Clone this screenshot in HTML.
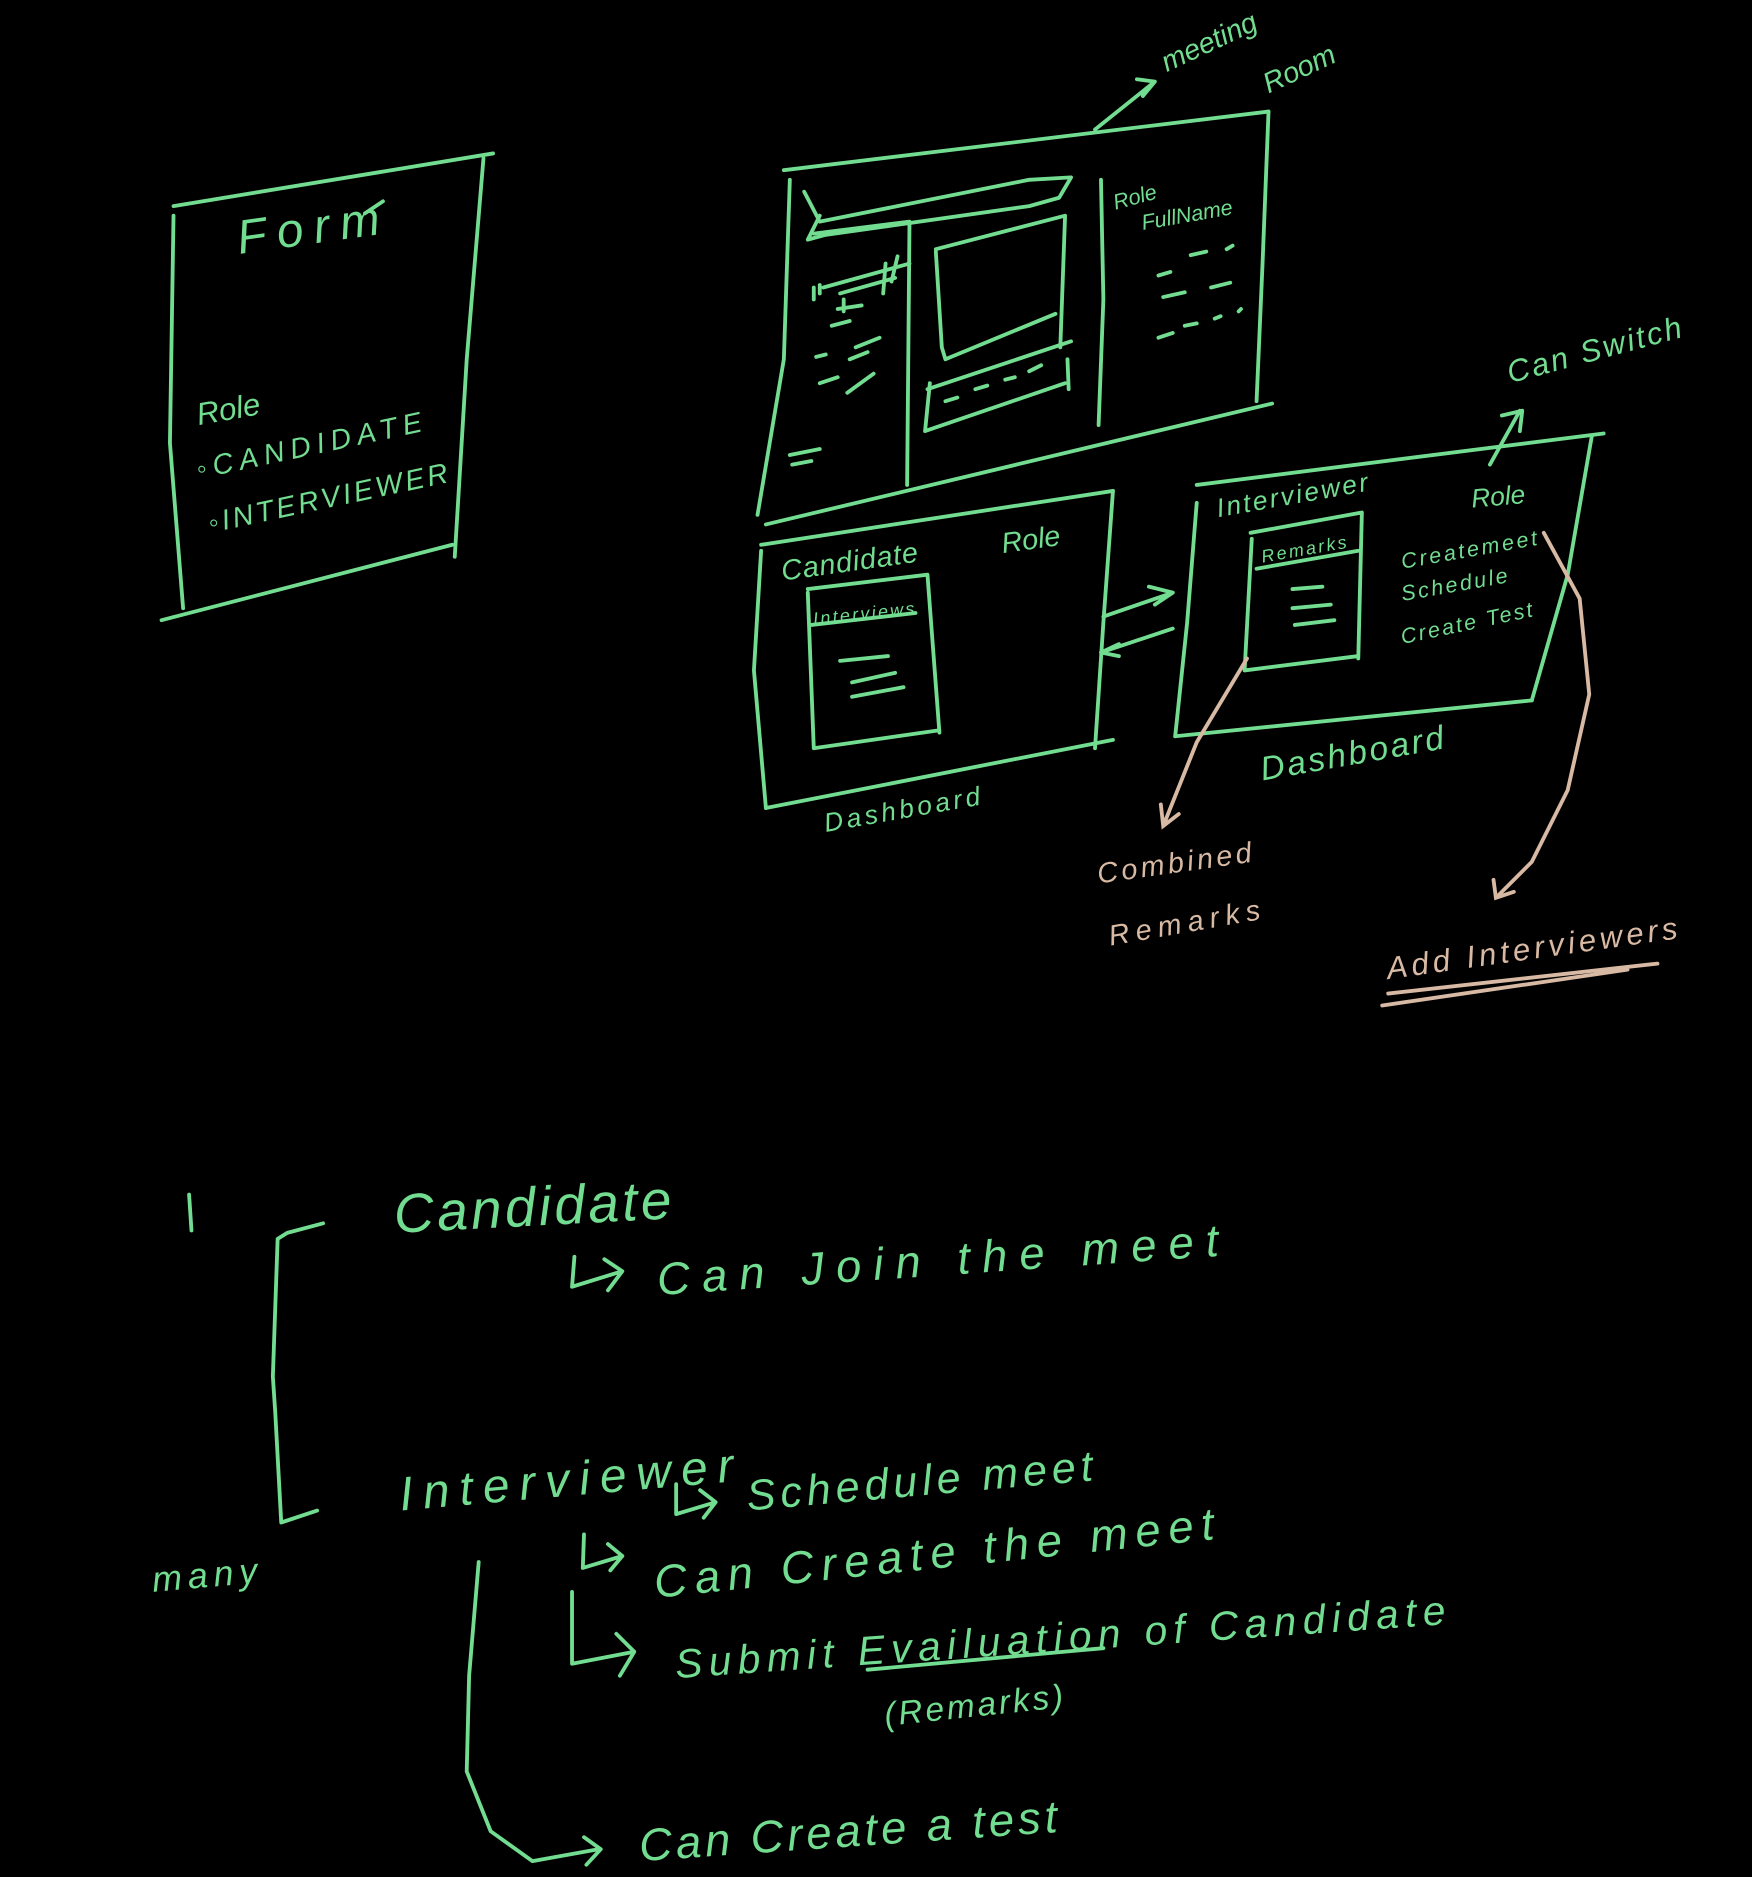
<!DOCTYPE html>
<html><head><meta charset="utf-8"><style>
html,body{margin:0;padding:0;background:#000;width:1752px;height:1877px;overflow:hidden}
svg{display:block}
text{font-family:"Liberation Sans",sans-serif;font-style:italic;fill:#72dc90}
.b{fill:#d8b9a3}
</style></head><body>
<svg width="1752" height="1877" viewBox="0 0 1464 1568" xmlns="http://www.w3.org/2000/svg">
<rect width="1464" height="1568" fill="#000"/>
<g fill="none" stroke="#72dc90" stroke-width="3.2" stroke-linecap="round" stroke-linejoin="round">
<path d="M145 172 L412 128"/><path d="M145 180 L142 370 L153 508"/><path d="M404 132 L390 300 L380 465"/><path d="M135 518 L378 455"/>
<path d="M320 168 L305 178"/>
<path d="M655 142 L1060 93"/><path d="M660 150 L655 300 L633 430"/><path d="M1060 93 L1055 220 L1050 335"/><path d="M640 438 L1063 337"/>
<path d="M672 160 L685 185 L860 150 L895 148 L885 165 L860 172 L690 196 L675 200 L685 180"/>
<path d="M688 240 L760 220 M685 238 L685 245 M702 245 L748 232 M700 258 L720 255 M740 220 L738 245 M750 214 L745 235"/>
<path d="M680 240 L680 250"/>
<path d="M680 195 L760 185 L758 405"/>
<path d="M705 250 L705 260"/>
<path d="M695 272 L710 268 M715 290 L735 282 M682 298 L690 296 M710 300 L725 294 M685 320 L700 315 M708 328 L730 312 M660 380 L685 375 M662 388 L678 385"/>
<path d="M782 208 L890 180 L886 290 M782 210 L787 290 L790 300 L882 262"/>
<path d="M775 325 L895 285 M777 320 L773 360 L890 320 M892 300 L893 325 M790 335 L800 332 M815 325 L825 322 M840 317 L848 315 M860 310 L870 305"/>
<path d="M920 150 L922 250 L918 355"/>
<path d="M968 230 L978 227 M995 213 L1008 210 M1025 208 L1030 205 M972 248 L990 244 M1012 240 L1028 236 M968 282 L980 278 M990 272 L1000 270 M1015 266 L1020 264 M1035 260 L1037 258"/>
<path d="M915 108 L965 68 M950 66 L965 68 L955 80"/>
<path d="M1245 388 L1270 343 M1255 347 L1272 343 L1270 360"/>
<path d="M636 455 L930 410"/><path d="M636 460 L630 560 L640 675"/><path d="M930 410 L922 520 L915 625"/><path d="M640 675 L930 618"/>
<path d="M675 492 L775 480 L785 612 M675 495 L680 625 L785 610 M678 522 L765 512"/>
<path d="M702 552 L742 548 M712 570 L748 562 M712 582 L755 574"/>
<path d="M1000 405 L1340 362"/><path d="M1000 420 L992 520 L982 615"/><path d="M1330 365 L1310 480 L1280 585"/><path d="M982 615 L1280 585"/>
<path d="M1045 445 L1138 428 L1135 550 M1046 450 L1040 560 L1135 548 M1050 475 L1135 460"/>
<path d="M1080 492 L1105 490 M1080 508 L1112 505 M1082 522 L1115 518"/>
<path d="M922 515 L980 495 M960 490 L980 495 L965 505 M920 545 L980 525 M935 538 L920 545 L935 548"/>
<path d="M158 998 L160 1028"/>
<path d="M270 1022 L240 1030 L232 1035 L228 1150 L230 1180 L235 1272 L265 1262"/>
<path d="M480 1050 L478 1075 L520 1062 M505 1052 L520 1062 L508 1078"/>
<path d="M565 1240 L565 1265 L598 1255 M585 1245 L598 1255 L588 1268"/>
<path d="M488 1282 L487 1310 L520 1300 M508 1290 L520 1300 L510 1312"/>
<path d="M478 1330 L478 1390 L530 1380 M515 1365 L530 1380 L518 1400"/>
<path d="M725 1395 L922 1377"/>
<path d="M400 1305 L392 1400 L390 1480 L410 1530 L445 1555 L500 1545 M488 1535 L502 1545 L490 1558"/>
</g>
<g fill="none" stroke="#d8b9a3" stroke-width="3.2" stroke-linecap="round">
<path d="M1042 550 L1000 620 L972 690 M970 672 L972 690 L985 680"/>
<path d="M1290 445 L1320 500 L1328 580 L1310 660 L1280 720 L1250 750 M1248 735 L1250 750 L1265 745"/>
<path d="M1160 830 L1385 805 M1155 840 L1360 810"/>
</g>
<text x="200" y="212" font-size="40" textLength="120" transform="rotate(-8 200 212)">Form</text>
<text x="166" y="355" font-size="26" transform="rotate(-10 166 355)">Role</text>
<text x="166" y="400" font-size="24" textLength="192" transform="rotate(-12 166 400)">◦CANDIDATE</text>
<text x="176" y="445" font-size="24" textLength="204" transform="rotate(-12 176 445)">◦INTERVIEWER</text>
<text x="975" y="60" font-size="24" transform="rotate(-25 975 60)">meeting</text>
<text x="1060" y="78" font-size="24" transform="rotate(-25 1060 78)">Room</text>
<text x="932" y="175" font-size="18" transform="rotate(-15 932 175)">Role</text>
<text x="955" y="192" font-size="18" transform="rotate(-10 955 192)">FullName</text>
<text x="1262" y="320" font-size="26" textLength="150" transform="rotate(-15 1262 320)">Can Switch</text>
<text x="654" y="485" font-size="24" textLength="115" transform="rotate(-8 654 485)">Candidate</text>
<text x="838" y="462" font-size="24" transform="rotate(-8 838 462)">Role</text>
<text x="680" y="522" font-size="15" textLength="85" transform="rotate(-6 680 522)">Interviews</text>
<text x="690" y="695" font-size="22" textLength="132" transform="rotate(-10 690 695)">Dashboard</text>
<text x="1018" y="432" font-size="22" textLength="128" transform="rotate(-10 1018 432)">Interviewer</text>
<text x="1230" y="424" font-size="22" transform="rotate(-5 1230 424)">Role</text>
<text x="1055" y="470" font-size="15" textLength="72" transform="rotate(-10 1055 470)">Remarks</text>
<text x="1172" y="475" font-size="18" textLength="115" transform="rotate(-10 1172 475)">Createmeet</text>
<text x="1172" y="502" font-size="18" textLength="90" transform="rotate(-10 1172 502)">Schedule</text>
<text x="1172" y="538" font-size="18" textLength="112" transform="rotate(-12 1172 538)">Create Test</text>
<text x="1055" y="652" font-size="28" textLength="155" transform="rotate(-10 1055 652)">Dashboard</text>
<text class="b" x="918" y="738" font-size="24" textLength="130" transform="rotate(-8 918 738)">Combined</text>
<text class="b" x="928" y="790" font-size="24" textLength="128" transform="rotate(-10 928 790)">Remarks</text>
<text class="b" x="1160" y="818" font-size="26" textLength="245" transform="rotate(-8 1160 818)">Add Interviewers</text>
<text x="330" y="1030" font-size="46" textLength="232" transform="rotate(-3 330 1030)">Candidate</text>
<text x="550" y="1082" font-size="38" textLength="470" transform="rotate(-4 550 1082)">Can Join the  meet</text>
<text x="335" y="1262" font-size="40" textLength="280" transform="rotate(-5 335 1262)">Interviewer</text>
<text x="625" y="1262" font-size="36" textLength="290" transform="rotate(-5 625 1262)">Schedule meet</text>
<text x="548" y="1335" font-size="38" textLength="470" transform="rotate(-6 548 1335)">Can Create the  meet</text>
<text x="565" y="1402" font-size="34" textLength="645" transform="rotate(-4 565 1402)">Submit  Evailuation  of Candidate</text>
<text x="740" y="1442" font-size="28" textLength="150" transform="rotate(-6 740 1442)">(Remarks)</text>
<text x="128" y="1330" font-size="30" textLength="88" transform="rotate(-5 128 1330)">many</text>
<text x="535" y="1555" font-size="38" textLength="350" transform="rotate(-4 535 1555)">Can Create  a test</text>
</svg>
</body></html>
